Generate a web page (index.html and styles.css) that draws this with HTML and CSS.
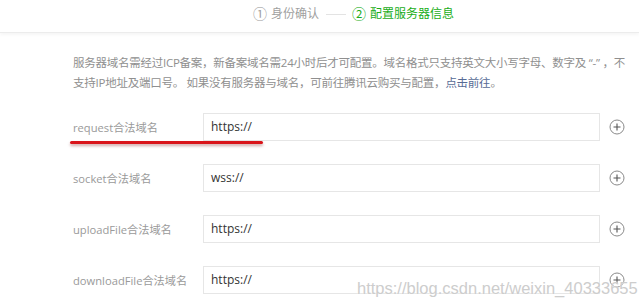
FILE: index.html
```html
<!DOCTYPE html>
<html lang="zh">
<head>
<meta charset="utf-8">
<link rel="stylesheet" href="styles.css">
</head>
<body>
<div class="header">
  <div class="step"><span class="num">①</span>身份确认</div>
  <div class="step-line"></div>
  <div class="step active"><span class="num">②</span>配置服务器信息</div>
</div>
<div class="main">
  <p class="desc">服务器域名需经过ICP备案，新备案域名需24小时后才可配置。域名格式只支持英文大小写字母、数字及 “-” ，不<br>支持IP地址及端口号。 如果没有服务器与域名，可前往腾讯云购买与配置，<a class="link">点击前往</a>。</p>
  <div class="form">
    <div class="row">
      <div class="label">request合法域名</div>
      <div class="input">https://</div>
      <span class="plus"><svg width="16" height="16" viewBox="0 0 16 16"><circle cx="8" cy="8" r="7" fill="none" stroke="#8a8a8a" stroke-width="1"/><path d="M8 4.5v7M4.5 8h7" stroke="#555" stroke-width="1.1"/></svg></span>
    </div>
    <div class="row">
      <div class="label">socket合法域名</div>
      <div class="input">wss://</div>
      <span class="plus"><svg width="16" height="16" viewBox="0 0 16 16"><circle cx="8" cy="8" r="7" fill="none" stroke="#8a8a8a" stroke-width="1"/><path d="M8 4.5v7M4.5 8h7" stroke="#555" stroke-width="1.1"/></svg></span>
    </div>
    <div class="row">
      <div class="label">uploadFile合法域名</div>
      <div class="input">https://</div>
      <span class="plus"><svg width="16" height="16" viewBox="0 0 16 16"><circle cx="8" cy="8" r="7" fill="none" stroke="#8a8a8a" stroke-width="1"/><path d="M8 4.5v7M4.5 8h7" stroke="#555" stroke-width="1.1"/></svg></span>
    </div>
    <div class="row">
      <div class="label">downloadFile合法域名</div>
      <div class="input">https://</div>
      <span class="plus"><svg width="16" height="16" viewBox="0 0 16 16"><circle cx="8" cy="8" r="7" fill="none" stroke="#8a8a8a" stroke-width="1"/><path d="M8 4.5v7M4.5 8h7" stroke="#555" stroke-width="1.1"/></svg></span>
    </div>
  </div>
</div>
<div class="redline"></div>
<div class="watermark">https://blog.csdn.net/weixin_40333655</div>
</body>
</html>
```
FILE: styles.css
```css
html, body {
  margin: 0;
  padding: 0;
  background: #fff;
}
body {
  position: relative;
  width: 639px;
  height: 307px;
  overflow: hidden;
  font-family: "Open Sans", "Noto Sans CJK SC", sans-serif;
  color: #999;
}
.header {
  height: 28px;
  border-bottom: 1px solid #ececec;
  box-shadow: 0 2px 3px rgba(0,0,0,0.04);
  display: flex;
  align-items: center;
  padding-left: 253px;
  padding-bottom: 4px;
}
.step {
  font-size: 12px;
  color: #a0a0a0;
  line-height: 20px;
  white-space: nowrap;
  display: flex;
  align-items: center;
}
.num {
  font-size: 14px;
  margin-right: 4px;
}
.step.active {
  color: #1aad19;
}
.step-line {
  width: 20px;
  height: 1px;
  background: #e3e3e3;
  margin: 0 6px 0 7px;
}
.main {
  padding-left: 73px;
  padding-top: 20px;
}
.desc {
  margin: 0;
  font-size: 11.5px;
  line-height: 20px;
  color: #8f8f8f;
  white-space: nowrap;
  letter-spacing: -0.25px;
}
.link {
  color: #576b95;
}
.form {
  margin-top: 20px;
  display: flex;
  flex-direction: column;
  gap: 23px;
}
.row {
  display: flex;
  align-items: center;
  height: 28px;
}
.label {
  width: 130px;
  font-size: 11.2px;
  color: #9a9a9a;
  white-space: nowrap;
}
.input {
  box-sizing: border-box;
  width: 397px;
  height: 28px;
  border: 1px solid #e6e6e6;
  padding-left: 7px;
  font-size: 12px;
  line-height: 26px;
  color: #333;
}
.plus {
  margin-left: 9px;
  display: flex;
}
.redline {
  position: absolute;
  left: 70px;
  top: 141px;
  width: 193px;
  height: 3px;
  border-radius: 2px;
  background: #d9141a;
  box-shadow: 0 2px 3px rgba(120,0,0,0.35);
}
.watermark {
  position: absolute;
  left: 357px;
  top: 279px;
  font-family: "Liberation Sans", Arial, sans-serif;
  font-size: 16.5px;
  color: #cdcdcd;
  text-shadow: 0 0 2px #fff;
  white-space: nowrap;
}
```
